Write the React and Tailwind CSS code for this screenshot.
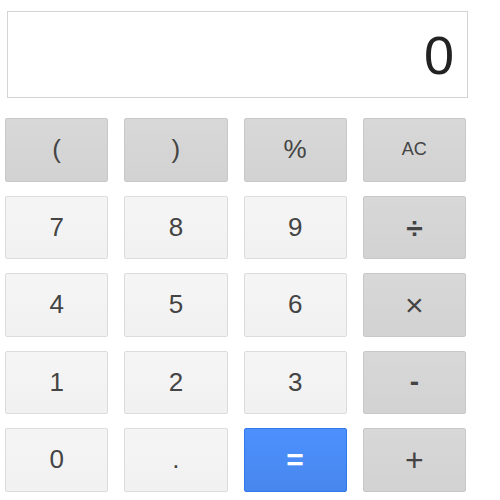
const keys = [
  { label: "(", kind: "op" },
  { label: ")", kind: "op" },
  { label: "%", kind: "op" },
  { label: "AC", kind: "op", size: "text-[18px]" },
  { label: "7", kind: "num" },
  { label: "8", kind: "num" },
  { label: "9", kind: "num" },
  { label: "÷", kind: "op", size: "text-[30px] font-bold" },
  { label: "4", kind: "num" },
  { label: "5", kind: "num" },
  { label: "6", kind: "num" },
  { label: "×", kind: "op", size: "text-[32px]" },
  { label: "1", kind: "num" },
  { label: "2", kind: "num" },
  { label: "3", kind: "num" },
  { label: "-", kind: "op", size: "text-[28px] font-bold" },
  { label: "0", kind: "num" },
  { label: ".", kind: "num" },
  { label: "=", kind: "eq", size: "text-[30px] font-bold" },
  { label: "+", kind: "op", size: "text-[32px]" },
];

function Key({ k }) {
  const base =
    "flex items-center justify-center rounded-[2px] border select-none";
  const styles = {
    num: "bg-gradient-to-b from-[#f5f5f5] to-[#f1f1f1] border-[#dcdcdc] text-[#444]",
    op: "bg-gradient-to-b from-[#d8d8d8] to-[#d2d2d2] border-[#c8c8c8] text-[#444]",
    eq: "bg-gradient-to-b from-[#4d90fe] to-[#4787ed] border-[#3079ed] text-white",
  };
  return (
    <div className={`${base} ${styles[k.kind]} ${k.size || "text-[26px]"}`}>
      {k.label}
    </div>
  );
}

export default function App() {
  return (
    <div className="w-[500px] h-[500px] bg-white font-['Liberation_Sans',Arial,sans-serif] pt-[11px]">
      <div className="ml-[7px] w-[461px] h-[87px] border border-[#d4d4d4] flex items-center justify-end pr-[13px]">
        <span className="text-[54px] leading-none text-[#222]">0</span>
      </div>
      <div className="ml-[5px] mt-[20px] w-[461px] grid grid-cols-4 gap-x-[16px] gap-y-[14px] auto-rows-[63.5px]">
        {keys.map((k) => (
          <Key key={k.label} k={k} />
        ))}
      </div>
    </div>
  );
}
